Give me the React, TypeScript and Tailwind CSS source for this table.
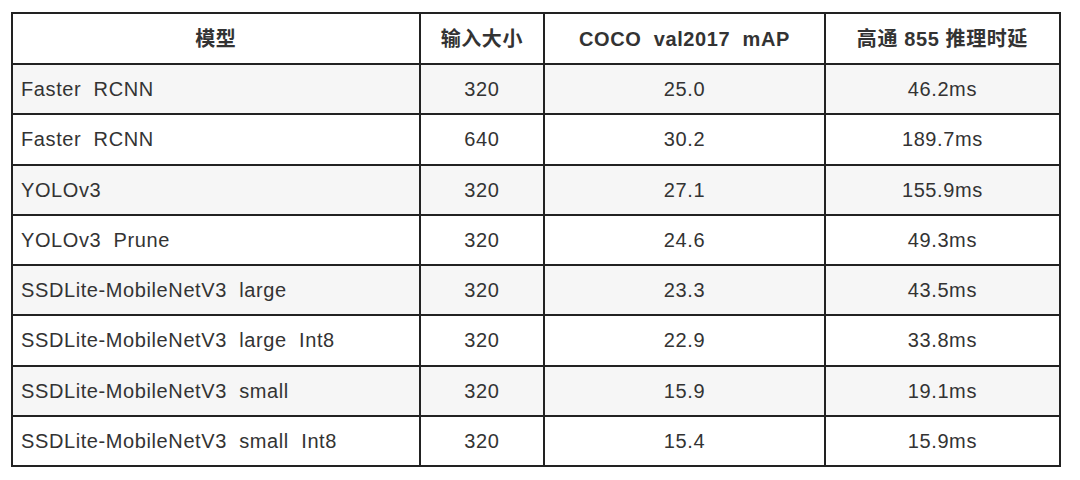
const rows = [
  ['Faster  RCNN', '320', '25.0', '46.2ms'],
  ['Faster  RCNN', '640', '30.2', '189.7ms'],
  ['YOLOv3', '320', '27.1', '155.9ms'],
  ['YOLOv3  Prune', '320', '24.6', '49.3ms'],
  ['SSDLite-MobileNetV3  large', '320', '23.3', '43.5ms'],
  ['SSDLite-MobileNetV3  large  Int8', '320', '22.9', '33.8ms'],
  ['SSDLite-MobileNetV3  small', '320', '15.9', '19.1ms'],
  ['SSDLite-MobileNetV3  small  Int8', '320', '15.4', '15.9ms'],
];

export default function App() {
  return (
    <div
      className="w-[1080px] h-[480px] bg-white pt-[12px] pl-[11px]"
      style={{ fontFamily: '"Liberation Sans", Arial, "Noto Sans CJK SC", sans-serif' }}
    >
      <table className="w-[1050px] border-collapse border-2 border-[#222] text-[20px] text-[#333] tracking-[0.6px]">
        <colgroup>
          <col className="w-[408px]" />
          <col className="w-[125px]" />
          <col className="w-[281px]" />
          <col className="w-[236px]" />
        </colgroup>
        <thead>
          <tr className="h-[51px] bg-white">
            <th className="border-2 border-[#222] font-bold text-center">模型</th>
            <th className="border-2 border-[#222] font-bold text-center">输入大小</th>
            <th className="border-2 border-[#222] font-bold text-center whitespace-pre">COCO  val2017  mAP</th>
            <th className="border-2 border-[#222] font-bold text-center">高通 855 推理时延</th>
          </tr>
        </thead>
        <tbody>
          {rows.map((r, i) => (
            <tr key={i} className={`h-[50.25px] ${i % 2 === 0 ? 'bg-[#f6f6f6]' : 'bg-white'}`}>
              <td className="border-2 border-[#222] px-[8px] text-left whitespace-pre">{r[0]}</td>
              <td className="border-2 border-[#222] text-center">{r[1]}</td>
              <td className="border-2 border-[#222] text-center">{r[2]}</td>
              <td className="border-2 border-[#222] text-center">{r[3]}</td>
            </tr>
          ))}
        </tbody>
      </table>
    </div>
  );
}
